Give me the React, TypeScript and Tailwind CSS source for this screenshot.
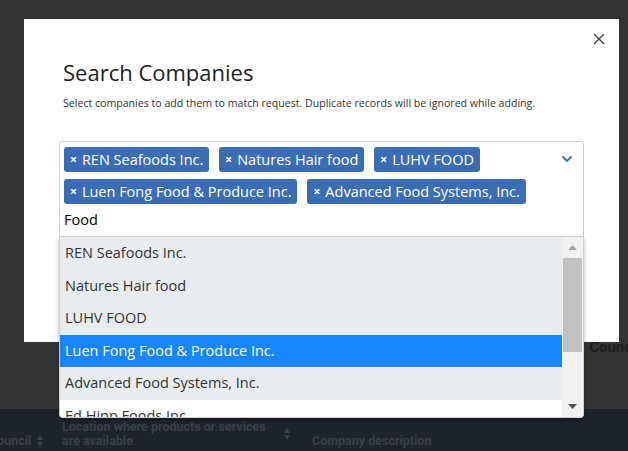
import React from 'react';

const SELECTED = [
  'REN Seafoods Inc.',
  'Natures Hair food',
  'LUHV FOOD',
  'Luen Fong Food & Produce Inc.',
  'Advanced Food Systems, Inc.',
];

const OPTIONS = [
  { label: 'REN Seafoods Inc.', picked: true },
  { label: 'Natures Hair food', picked: true },
  { label: 'LUHV FOOD', picked: true },
  { label: 'Luen Fong Food & Produce Inc.', picked: true, active: true },
  { label: 'Advanced Food Systems, Inc.', picked: true },
  { label: 'Ed Hipp Foods Inc', picked: false },
];

const SortIcon = () => (
  <svg width="6" height="12" viewBox="0 0 6 12" className="shrink-0">
    <path d="M3 0 L6 5 L0 5 Z" fill="#3a3f47" />
    <path d="M3 12 L6 7 L0 7 Z" fill="#3a3f47" />
  </svg>
);

export default function App() {
  return (
    <div
      className="w-[628px] h-[451px] relative overflow-hidden bg-[#333333]"
      style={{ fontFamily: '"Open Sans", "Noto Sans", sans-serif' }}
    >
      {/* page behind the overlay */}
      <div className="h-full flex flex-col">
        <div className="flex-1 flex flex-col justify-end pb-[51px]">
          <div className="flex justify-end">
            <span className="text-[15px] font-bold text-[#1e1e1e] mr-[-12px]" style={{ fontFamily: 'Roboto, sans-serif' }}>Council</span>
          </div>
        </div>
        <div
          className="h-[42px] bg-[#1f242b] flex items-end pb-[3px] text-[12.5px] font-bold text-[#3a3f47] leading-[14px]"
          style={{ fontFamily: 'Roboto, sans-serif' }}
        >
          <div className="flex items-center gap-[6px] ml-[-11px] w-[73px]">
            <span>Council</span>
            <SortIcon />
          </div>
          <div className="w-[250px] flex items-center">
            <span className="w-[222px]">Location where products or services are available</span>
            <SortIcon />
          </div>
          <div>Company description</div>
        </div>
      </div>

      {/* modal */}
      <div className="absolute left-[24px] top-[19px] w-[595px] h-[323px] bg-white">
        <button className="absolute right-[13px] top-[13px] w-[14px] h-[14px] flex items-center justify-center">
          <svg width="12" height="12" viewBox="0 0 12 12">
            <path d="M1 1 L11 11 M11 1 L1 11" stroke="#444" strokeWidth="1.4" />
          </svg>
        </button>
        <div className="pl-[39px] pt-[38px]">
          <h2 className="text-[22px] leading-[30px] text-[#222]">Search Companies</h2>
          <p className="text-[10.6px] leading-[16px] text-[#333] mt-[8px]">
            Select companies to add them to match request. Duplicate records will be ignored while adding.
          </p>
        </div>

        {/* multi select */}
        <div className="absolute left-[35px] top-[122px] w-[525px]">
          <div className="h-[96px] border border-[#cfcfcf] rounded-t-[3px] pl-[4px] pr-[30px] pt-[5px] relative">
            <div className="flex flex-wrap gap-x-[10px] gap-y-[7px]">
              {SELECTED.map((s) => (
                <div key={s} className="h-[25px] bg-[#3a6db4] text-white rounded-[3px] px-[6px] flex items-center gap-[5px] text-[14.5px]">
                  <span className="text-[12px] font-bold">×</span>
                  <span>{s}</span>
                </div>
              ))}
            </div>
            <div className="text-[14.5px] text-black mt-[5px] leading-[22px]">Food</div>
            <svg className="absolute right-[10px] top-[13px]" width="12" height="8" viewBox="0 0 12 8">
              <path d="M1.5 1.5 L6 6 L10.5 1.5" stroke="#3a6db4" strokeWidth="1.8" fill="none" />
            </svg>
          </div>

          {/* options list */}
          <div className="h-[181px] border border-t-0 border-[#cfcfcf] rounded-b-[4px] bg-white shadow-[0_2px_4px_rgba(0,0,0,0.3)] flex overflow-hidden">
            <div className="flex-1 overflow-hidden">
              {OPTIONS.map((o) => (
                <div
                  key={o.label}
                  className={
                    'h-[32.5px] flex items-center pl-[5px] text-[14.5px] ' +
                    (o.active
                      ? 'bg-[#1a85fb] text-white'
                      : o.picked
                        ? 'bg-[#e9ecef] text-[#333]'
                        : 'bg-white text-[#333]')
                  }
                >
                  {o.label}
                </div>
              ))}
            </div>
            <div className="w-[21px] bg-[#f1f1f1] flex flex-col items-center">
              <div className="h-[21px] flex items-center justify-center">
                <svg width="9" height="5" viewBox="0 0 9 5"><path d="M4.5 0 L9 5 L0 5 Z" fill="#a3a3a3" /></svg>
              </div>
              <div className="w-[19px] h-[94px] bg-[#c1c1c1]" />
              <div className="flex-1" />
              <div className="h-[21px] flex items-center justify-center">
                <svg width="9" height="5" viewBox="0 0 9 5"><path d="M0 0 L9 0 L4.5 5 Z" fill="#505050" /></svg>
              </div>
            </div>
          </div>
        </div>
      </div>
    </div>
  );
}
